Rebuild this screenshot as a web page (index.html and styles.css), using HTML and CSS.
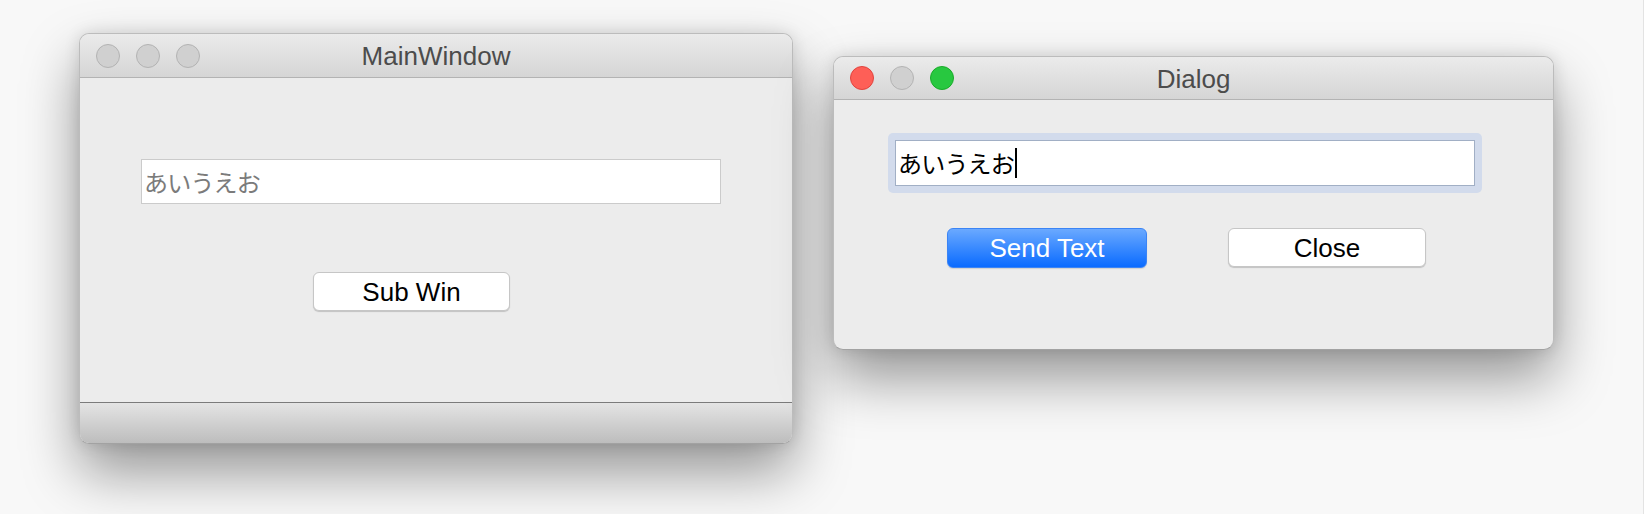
FILE: index.html
```html
<!DOCTYPE html>
<html lang="ja">
<head>
<meta charset="utf-8">
<title>Windows</title>
<link rel="stylesheet" href="styles.css">
</head>
<body>
<div class="desktop">
  <div class="window main-window">
    <div class="titlebar">
      <div class="lights">
        <span class="light gray"></span>
        <span class="light gray"></span>
        <span class="light gray"></span>
      </div>
      <div class="title">MainWindow</div>
    </div>
    <div class="content main-content">
      <div class="field placeholder">あいうえお</div>
      <div class="btn btn-white sub-btn">Sub Win</div>
    </div>
    <div class="statusbar"></div>
  </div>

  <div class="window dialog">
    <div class="titlebar">
      <div class="lights">
        <span class="light red"></span>
        <span class="light gray"></span>
        <span class="light green"></span>
      </div>
      <div class="title">Dialog</div>
    </div>
    <div class="content dialog-content">
      <div class="focus-ring">
        <div class="field active">あいうえお<span class="caret"></span></div>
      </div>
      <div class="btn-row">
        <div class="btn btn-blue send-btn">Send Text</div>
        <div class="btn btn-white close-btn">Close</div>
      </div>
    </div>
  </div>
</div>
</body>
</html>
```

FILE: styles.css
```css
html, body {
  margin: 0;
  padding: 0;
  background: #ffffff;
}

body {
  width: 1646px;
  height: 514px;
  overflow: hidden;
  font-family: "Liberation Sans", Arial, "Noto Sans CJK JP", sans-serif;
}

.desktop {
  position: relative;
  width: 1643px;
  height: 514px;
  background: #f8f8f8;
  border-right: 1px solid #e3e3e3;
  overflow: hidden;
}

.window {
  position: absolute;
  box-sizing: border-box;
  display: flex;
  flex-direction: column;
  background: #ececec;
  border: 1px solid #bcbcbc;
  border-bottom-color: #a2a2a2;
  border-radius: 10px;
  overflow: hidden;
  box-shadow: 0 28px 56px rgba(0, 0, 0, 0.40), 0 0 16px rgba(0, 0, 0, 0.12);
}

.main-window {
  left: 79px;
  top: 33px;
  width: 714px;
  height: 411px;
}

.dialog {
  left: 833px;
  top: 56px;
  width: 721px;
  height: 294px;
}

.titlebar {
  flex: none;
  box-sizing: border-box;
  height: 44px;
  display: grid;
  grid-template-columns: 1fr auto 1fr;
  align-items: center;
  background: linear-gradient(#ebebeb, #d5d5d5);
  border-bottom: 1px solid #b3b3b3;
}

.dialog .titlebar {
  height: 43px;
}

.lights {
  display: flex;
  gap: 16px;
  padding-left: 16px;
}

.light {
  box-sizing: border-box;
  width: 24px;
  height: 24px;
  border-radius: 50%;
}

.light.gray {
  background: #d0d0d0;
  border: 1px solid #b3b3b3;
}

.light.red {
  background: #fe5f57;
  border: 1px solid #e0443e;
}

.light.green {
  background: #28c840;
  border: 1px solid #1aab29;
}

.title {
  font-size: 26px;
  color: #4c4c4c;
  line-height: 1;
  padding-top: 1px;
}

.content {
  flex: 1;
  display: flex;
  flex-direction: column;
  align-items: flex-start;
}

.main-content {
  padding: 81px 0 0 61px;
}

.field {
  box-sizing: border-box;
  width: 580px;
  height: 45px;
  display: flex;
  align-items: center;
  padding-left: 2px;
  background: #ffffff;
  border: 1px solid #cbcbcb;
  font-family: "Noto Sans CJK JP", "Liberation Sans", sans-serif;
  font-size: 24px;
  letter-spacing: -0.8px;
  line-height: 1;
}

.field.placeholder {
  color: #7b7b7b;
}

.btn {
  box-sizing: border-box;
  display: flex;
  align-items: center;
  justify-content: center;
  font-size: 26px;
  line-height: 1;
  border-radius: 6px;
}

.btn-white {
  background: #ffffff;
  color: #000000;
  border: 1px solid #c6c6c6;
  box-shadow: 0 1px 1px rgba(0, 0, 0, 0.18);
}

.sub-btn {
  margin: 68px 0 0 172px;
  width: 197px;
  height: 39px;
}

.statusbar {
  flex: none;
  height: 41px;
  box-sizing: border-box;
  border-top: 1px solid #7b7b7b;
  background: linear-gradient(#e4e4e4, #bdbdbd);
}

.dialog-content {
  padding: 33px 0 0 54px;
}

.focus-ring {
  box-sizing: border-box;
  width: 594px;
  height: 60px;
  padding: 7px;
  border-radius: 5px;
  background: #d2dbec;
}

.field.active {
  height: 46px;
  color: #000000;
  border-color: #a1afc5;
}

.caret {
  display: inline-block;
  width: 2px;
  height: 30px;
  margin-left: 1px;
  background: #000000;
}

.btn-row {
  display: flex;
  align-items: flex-start;
  gap: 81px;
  margin: 35px 0 0 59px;
}

.btn-blue {
  width: 200px;
  height: 40px;
  color: #ffffff;
  background: linear-gradient(#6aa9ff, #0a6bff);
  border: 1px solid #3b84f5;
  box-shadow: 0 1px 1px rgba(0, 0, 0, 0.12);
}

.close-btn {
  width: 198px;
  height: 39px;
}
```
